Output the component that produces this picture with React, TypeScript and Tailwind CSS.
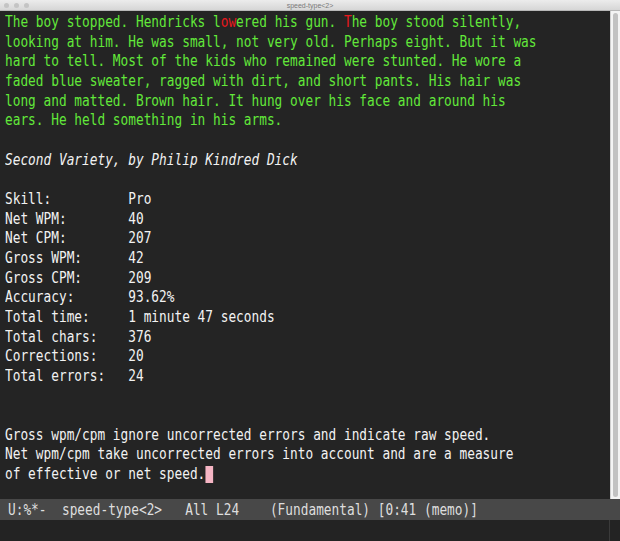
import React from "react";

const mono = "font-['DejaVu_Sans_Mono','Liberation_Mono',monospace]";

type Seg = { t: string; red?: boolean };

const story: Seg[][] = [
  [
    { t: "The boy stopped. Hendricks l" },
    { t: "ow", red: true },
    { t: "ered his gun. " },
    { t: "T", red: true },
    { t: "he boy stood silently," },
  ],
  [{ t: "looking at him. He was small, not very old. Perhaps eight. But it was" }],
  [{ t: "hard to tell. Most of the kids who remained were stunted. He wore a" }],
  [{ t: "faded blue sweater, ragged with dirt, and short pants. His hair was" }],
  [{ t: "long and matted. Brown hair. It hung over his face and around his" }],
  [{ t: "ears. He held something in his arms." }],
];

const stats: [string, string][] = [
  ["Skill:", "Pro"],
  ["Net WPM:", "40"],
  ["Net CPM:", "207"],
  ["Gross WPM:", "42"],
  ["Gross CPM:", "209"],
  ["Accuracy:", "93.62%"],
  ["Total time:", "1 minute 47 seconds"],
  ["Total chars:", "376"],
  ["Corrections:", "20"],
  ["Total errors:", "24"],
];

function Line({ children, className = "" }: { children?: React.ReactNode; className?: string }) {
  return <div className={`h-[19.67px] whitespace-pre ${className}`}>{children ?? "\u00a0"}</div>;
}

export default function App() {
  return (
    <div className={`w-[620px] h-[541px] flex flex-col bg-[#232323] overflow-hidden ${mono}`}>
      {/* title bar */}
      <div className="h-[11px] relative flex items-center justify-center bg-gradient-to-b from-[#ececec] to-[#d6d6d6] border-b border-[#b8b8b8]">
        <div className="absolute left-[4px] top-[3px] flex gap-[5px]">
          <span className="w-[5px] h-[5px] rounded-full bg-[#c4c4c4]" />
          <span className="w-[5px] h-[5px] rounded-full bg-[#c4c4c4]" />
          <span className="w-[5px] h-[5px] rounded-full bg-[#c4c4c4]" />
        </div>
        <span className="font-['Liberation_Sans',sans-serif] text-[7px] leading-[7px] text-[#7a7a7a]">speed-type&lt;2&gt;</span>
      </div>

      {/* buffer */}
      <div className="h-[488px] flex">
        <div className="flex-1 pl-[5px] pt-[2px] overflow-hidden bg-[#242424]">
          <div className="w-[700px] origin-top-left scale-x-[0.853] text-[15px] leading-[19.67px] text-[#f2f2f2]">
            {story.map((segs, i) => (
              <Line key={i} className="text-[#62e83a]">
                {segs.map((s, j) => (
                  <span key={j} className={s.red ? "text-[#e8181c]" : ""}>
                    {s.t}
                  </span>
                ))}
              </Line>
            ))}
            <Line />
            <Line className="italic">Second Variety, by Philip Kindred Dick</Line>
            <Line />
            {stats.map(([k, v]) => (
              <Line key={k}>{k.padEnd(16, " ") + v}</Line>
            ))}
            <Line />
            <Line />
            <Line>Gross wpm/cpm ignore uncorrected errors and indicate raw speed.</Line>
            <Line>Net wpm/cpm take uncorrected errors into account and are a measure</Line>
            <Line>
              of effective or net speed.
              <span className="inline-block align-top mt-[1px] w-[9.03px] h-[17px] bg-[#f5b5c4]" />
            </Line>
          </div>
        </div>
        {/* scroll bar */}
        <div className="w-[10px] bg-[#f4f4f4] border-l border-[#d0d0d0] px-[2px] py-[2px]">
          <div className="h-full rounded-full bg-[#c2c2c2]" />
        </div>
      </div>

      {/* mode line */}
      <div className="h-[21px] flex items-center pl-[8px] pt-[2px] bg-[#484848] overflow-hidden">
        <div className="w-[700px] shrink-0 origin-left scale-x-[0.853] text-[15px] leading-[19px] text-[#dedede] whitespace-pre">
          U:%*-  speed-type&lt;2&gt;   All L24    (Fundamental) [0:41 (memo)]
        </div>
      </div>

      {/* minibuffer */}
      <div className="flex-1 flex justify-end">
        <div className="w-[11px] border-l border-[#3a3a3a]" />
      </div>
    </div>
  );
}
